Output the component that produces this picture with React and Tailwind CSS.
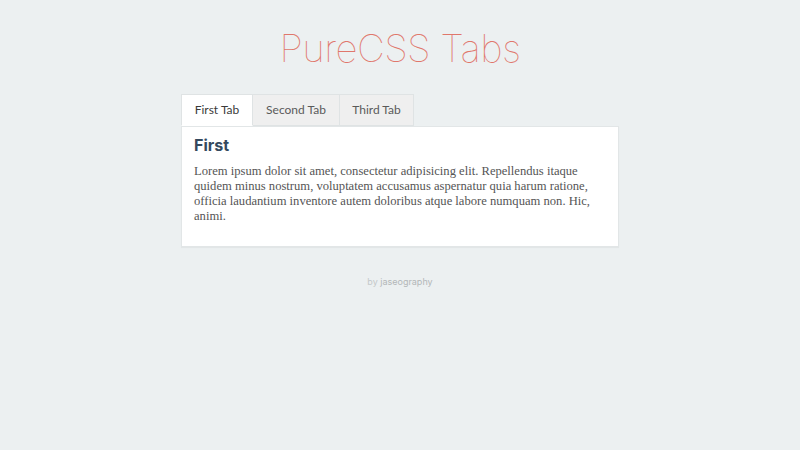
export default function App() {
  const tabs = ["First Tab", "Second Tab", "Third Tab"];
  return (
    <div className="min-h-[450px] w-full bg-[#ecf0f1] flex flex-col items-center pt-[25px]" style={{ fontFamily: "Lato, Inter, sans-serif" }}>
      <h1 className="text-[38.5px] leading-[46px] font-thin text-[#e0776c] tracking-[-0.6px]" style={{ fontFamily: "Inter, sans-serif" }}>PureCSS Tabs</h1>
      <div className="w-[438px] mt-[23px]">
        <div className="flex">
          {tabs.map((t, i) => (
            <div
              key={t}
              className={
                "h-[32px] flex items-center justify-center text-[12px] border border-[#dfe3e4] " +
                (i === 0
                  ? "w-[72px] bg-white text-[#3a3a3a] border-b-white -mb-px relative z-10"
                  : i === 1
                  ? "w-[87px] bg-[#efefef] text-[#5a5a5a] border-l-0"
                  : "w-[74px] bg-[#efefef] text-[#5a5a5a] border-l-0")
              }
            >
              {t}
            </div>
          ))}
        </div>
        <div className="bg-white border border-[#e2e6e7] px-[12px] pt-[7px] pb-[22px] shadow-[0_1px_1px_rgba(0,0,0,0.04)]">
          <h2 className="text-[16px] font-bold text-[#34495e] leading-[22px] mb-[8px]" style={{ fontFamily: "Inter, sans-serif" }}>First</h2>
          <p className="text-[12.6px] leading-[15px] text-[#555] w-[404px]" style={{ fontFamily: "'Liberation Serif', serif" }}>
            Lorem ipsum dolor sit amet, consectetur adipisicing elit. Repellendus itaque quidem minus nostrum, voluptatem accusamus aspernatur quia harum ratione, officia laudantium inventore autem doloribus atque labore numquam non. Hic, animi.
          </p>
        </div>
      </div>
      <div className="mt-[28px] text-[9px] text-[#c4c8c9]" style={{ fontFamily: "Inter, sans-serif" }}>
        by <span className="text-[#b3b7b8]">jaseography</span>
      </div>
    </div>
  );
}
